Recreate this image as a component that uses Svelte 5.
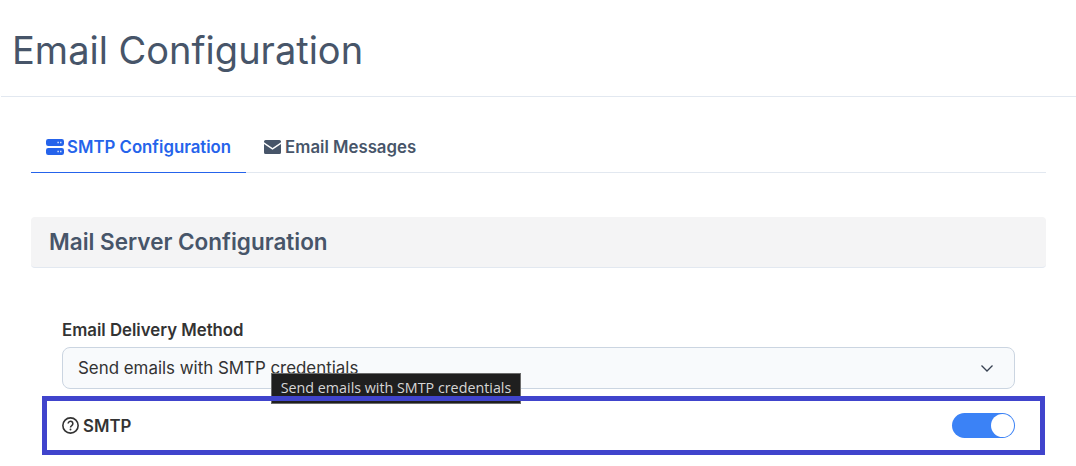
<script lang="ts">
  let smtpEnabled = $state(true);
  let activeTab = $state('smtp');
</script>

<div class="page">
  <header class="page-header">
    <h1>Email Configuration</h1>
  </header>

  <div class="content">
    <nav class="tabs">
      <button class="tab" class:active={activeTab === 'smtp'} onclick={() => (activeTab = 'smtp')}>
        <svg width="18" height="16" viewBox="0 0 18 16" aria-hidden="true">
          <path fill-rule="evenodd" d="M2.2 0h13.6A2.2 2.2 0 0 1 18 2.200v2.600a2.200 2.200 0 0 1-2.200 2.200H2.200A2.200 2.200 0 0 1 0 4.800V2.200A2.200 2.200 0 0 1 2.200 0zM2.200 9h13.600A2.200 2.200 0 0 1 18 11.200v2.600a2.200 2.200 0 0 1-2.200 2.200H2.200A2.200 2.200 0 0 1 0 13.800v-2.600A2.200 2.200 0 0 1 2.200 9zM11.500 2.800h1.200v1.400h-1.200zM14.200 2.800h1.200v1.400h-1.200zM11.500 11.800h1.200v1.400h-1.200zM14.200 11.800h1.200v1.400h-1.200z" fill="currentColor" />
        </svg>
        SMTP Configuration
      </button>
      <button class="tab" class:active={activeTab === 'messages'} onclick={() => (activeTab = 'messages')}>
        <svg class="envelope" width="17" height="14" viewBox="0 0 17 14" aria-hidden="true">
          <path d="M1.600 0h13.800A1.600 1.600 0 0 1 17 1.600v.6L8.500 8 0 2.200v-.6A1.600 1.600 0 0 1 1.600 0z" fill="currentColor" />
          <path d="M0 4l8.500 5.700L17 4v8.400a1.600 1.600 0 0 1-1.600 1.600H1.600A1.600 1.600 0 0 1 0 12.400z" fill="currentColor" />
        </svg>
        Email Messages
      </button>
    </nav>

    <section class="section-head">
      <h2>Mail Server Configuration</h2>
    </section>

    <div class="form">
      <div class="field">
        <span class="field-label">Email Delivery Method</span>
        <div class="select">
          <span>Send emails with SMTP credentials</span>
          <svg width="16" height="16" viewBox="0 0 16 16" aria-hidden="true">
            <path d="M2.500 5.500 8 11l5.500-5.500" fill="none" stroke="#374151" stroke-width="1.300" />
          </svg>
        </div>
        <div class="tooltip">Send emails with SMTP credentials</div>
      </div>

      <div class="smtp-row">
        <span class="row-label">
          <svg width="17" height="17" viewBox="0 0 16 16" aria-hidden="true">
            <circle cx="8" cy="8" r="7.200" fill="none" stroke="currentColor" stroke-width="1.500" />
            <path d="M5.800 6.200a2.200 2.200 0 1 1 3.400 1.850c-.75.5-1.200.9-1.200 1.750" fill="none" stroke="currentColor" stroke-width="1.500" />
            <circle cx="8" cy="11.700" r=".9" fill="currentColor" />
          </svg>
          SMTP
        </span>
        <button
          class="toggle"
          class:on={smtpEnabled}
          aria-label="Toggle SMTP"
          onclick={() => (smtpEnabled = !smtpEnabled)}
        ><span class="knob"></span></button>
      </div>
    </div>
  </div>
</div>

<style>
  :global(body) {
    margin: 0;
    background: #fff;
    font-family: Inter, "Liberation Sans", sans-serif;
  }

  .page {
    height: 466px;
    overflow: hidden;
    padding-left: 1px;
    box-sizing: border-box;
  }

  .page-header {
    height: 96px;
    border-bottom: 1px solid #e2e8f0;
    padding-left: 11px;
  }

  h1 {
    margin: 0;
    padding-top: 28px;
    font-size: 38px;
    line-height: 44px;
    font-weight: 400;
    color: #475569;
  }

  .content {
    padding: 0 30px;
  }

  .tabs {
    display: flex;
    gap: 3px;
    height: 75px;
    border-bottom: 1px solid #e2e8f0;
    box-sizing: content-box;
  }

  .tab {
    display: flex;
    align-items: center;
    gap: 3px;
    height: 76px;
    padding: 25px 15px 0;
    border: 0;
    border-bottom: 1px solid transparent;
    background: none;
    font: 600 16.800px Inter, sans-serif;
    color: #475569;
    box-sizing: border-box;
  }

  .tab.active {
    color: #2563eb;
    border-bottom-color: #2563eb;
  }

  .envelope {
    margin-right: 1px;
  }

  .section-head {
    margin-top: 44px;
    height: 51px;
    padding: 0 18px 2px;
    display: flex;
    align-items: center;
    background: #f4f4f5;
    border-bottom: 1px solid #e2e8f0;
    border-radius: 4px;
    box-sizing: border-box;
  }

  h2 {
    margin: 0;
    font-size: 22.500px;
    font-weight: 600;
    color: #475569;
  }

  .form {
    padding: 52px 0 0 11px;
  }

  .field {
    position: relative;
    padding: 0 31px 0 20px;
  }

  .field-label {
    display: block;
    font-size: 16.800px;
    line-height: 20px;
    font-weight: 600;
    color: #333333;
    margin-bottom: 7px;
  }

  .select {
    display: flex;
    align-items: center;
    justify-content: space-between;
    height: 42px;
    padding: 0 19px 0 15px;
    background: #f8fafc;
    border: 1px solid #cbd5e1;
    border-radius: 8px;
    font-size: 16.900px;
    color: #333333;
    box-sizing: border-box;
  }

  .tooltip {
    position: absolute;
    left: 229px;
    top: 53px;
    width: 250px;
    height: 31px;
    padding-top: 4px;
    text-align: center;
    background: #1f1f1f;
    border: 1px solid #6b6b6b;
    color: #d6d6d6;
    font: 14.300px "Open Sans", sans-serif;
    box-sizing: border-box;
  }

  .smtp-row {
    position: relative;
    display: flex;
    align-items: center;
    justify-content: space-between;
    height: 59px;
    margin: 7px 1px 0 0;
    padding: 0 25px 0 15px;
    border: 5px solid #4044cc;
    box-sizing: border-box;
  }

  .row-label {
    display: flex;
    align-items: center;
    gap: 4px;
    font-size: 16.800px;
    font-weight: 600;
    color: #333333;
  }

  .toggle {
    display: flex;
    align-items: center;
    width: 63px;
    height: 25px;
    padding: 1px;
    border: 0;
    border-radius: 13px;
    background: #cbd5e1;
    box-sizing: border-box;
  }

  .toggle.on {
    justify-content: flex-end;
    background: #3b82f6;
  }

  .knob {
    width: 23px;
    height: 23px;
    border-radius: 50%;
    background: #fff;
  }
</style>
